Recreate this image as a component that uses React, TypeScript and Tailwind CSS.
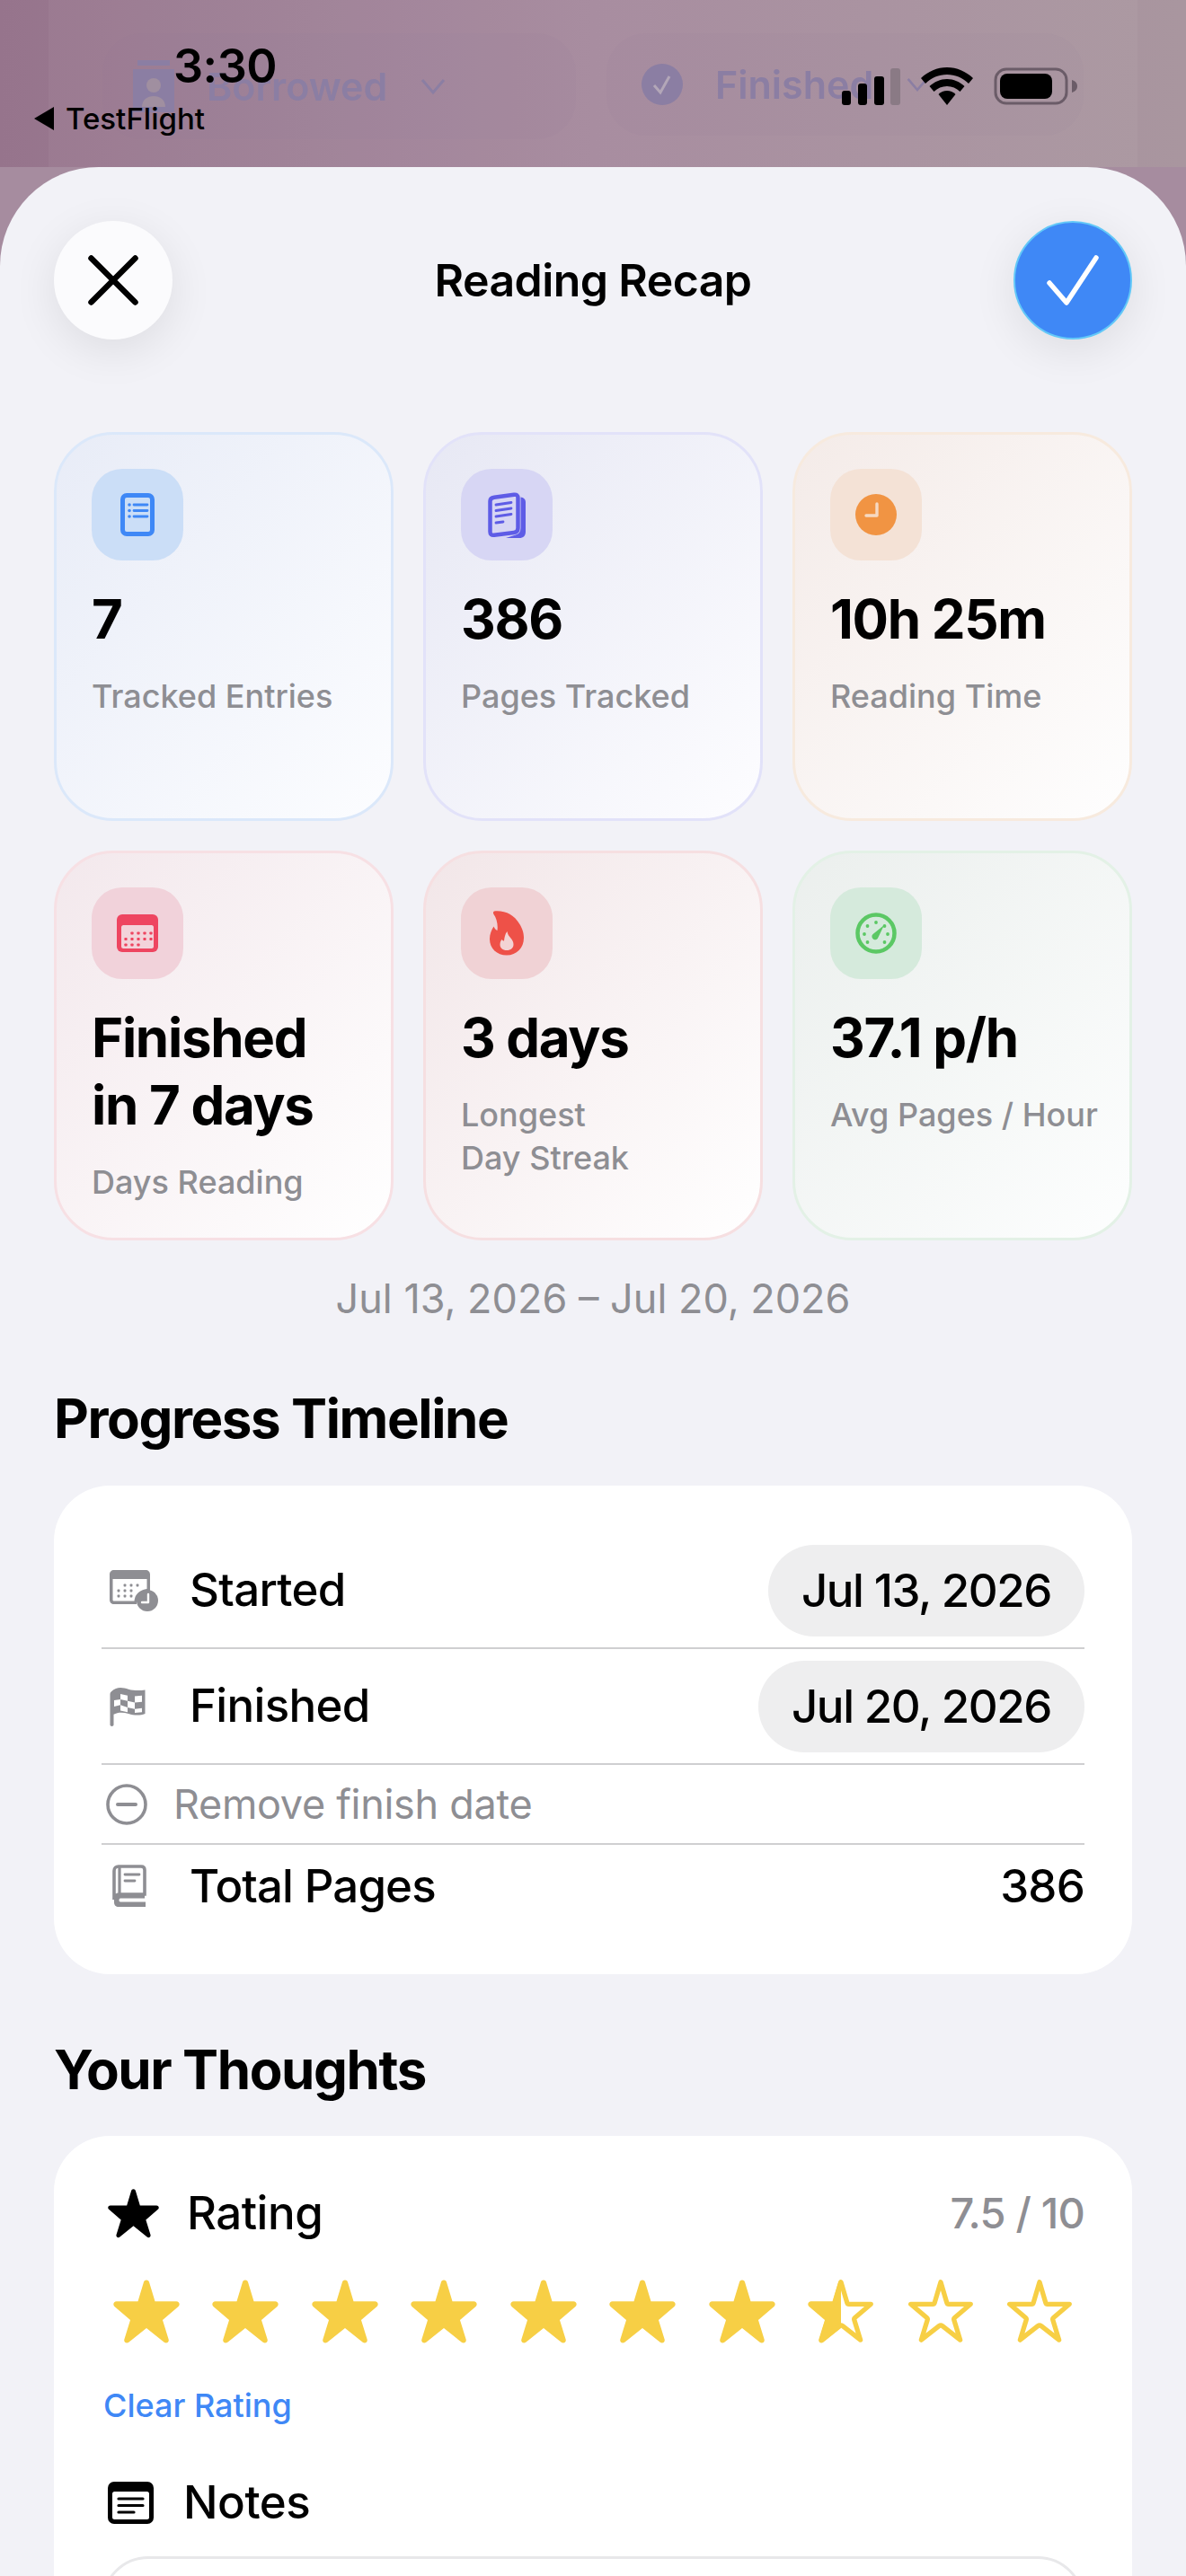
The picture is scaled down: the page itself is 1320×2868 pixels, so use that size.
const STAR =
  'M37 3.5C38.6 3.5 39.6 4.6 40 6L46 26H68.5C71.5 26 72.8 29.4 70.6 31.3L54 45.5L60.3 65.8C61.2 68.9 58 70.9 55.6 69L37 54L18.4 69C16 70.9 12.8 68.9 13.7 65.8L20 45.5L3.4 31.3C1.2 29.4 2.5 26 5.5 26H28L34 6C34.4 4.6 35.4 3.5 37 3.5Z';

const OUTLINE =
  'M37 5.5L43.5 27.5C43.8 28.4 44.4 28.8 45.3 28.8H68.5L51.6 43.2C50.9 43.8 50.7 44.5 51 45.4L57.5 66.5L38.8 51.8C37.7 51 36.3 51 35.2 51.8L16.5 66.5L23 45.4C23.3 44.5 23.1 43.8 22.4 43.2L5.5 28.8H28.7C29.6 28.8 30.2 28.4 30.5 27.5Z';

function Star({ kind }: { kind: 'full' | 'half' | 'empty' }) {
  if (kind === 'full') {
    return (
      <svg viewBox="2 3.5 70 67" className="h-[72px] w-[74px] text-[#f7cf45]">
        <path d={STAR} fill="currentColor" />
      </svg>
    );
  }
  return (
    <svg viewBox="2 3.5 70 67" className="h-[72px] w-[74px] text-[#f7cf45]">
      {kind === 'half' && (
        <>
          <clipPath id="half-star">
            <rect width="37" height="72" />
          </clipPath>
          <path d={STAR} fill="currentColor" clipPath="url(#half-star)" />
        </>
      )}
      <path d={OUTLINE} fill="none" stroke="currentColor" strokeWidth="5" strokeLinejoin="round" />
    </svg>
  );
}

function ListDocIcon() {
  return (
    <svg viewBox="0 0 38 48" className="h-[48px] w-[38px] text-[#3f88f6]">
      <rect x="2.5" y="2.5" width="33" height="43" rx="4.5" fill="none" stroke="currentColor" strokeWidth="5" />
      <circle cx="10" cy="13" r="1.8" fill="currentColor" />
      <circle cx="10" cy="19.5" r="1.8" fill="currentColor" />
      <circle cx="10" cy="26" r="1.8" fill="currentColor" />
      <path d="M15 13H30M15 19.5H30M15 26H30" stroke="currentColor" strokeWidth="2.8" strokeLinecap="round" />
    </svg>
  );
}

function PagesIcon() {
  return (
    <svg viewBox="0 0 42 51" className="h-[51px] w-[42px] text-[#5e5ce6]">
      <path d="M36.5 5.5C39.5 6 42 7.5 42 11V44C42 48.5 39.5 51 35 51H20L31 47.5C34.5 46.5 36.5 44 36.5 40Z" fill="currentColor" />
      <path d="M7 5.7L29 2.7C32 2.3 33.5 3.7 33.5 6.5V40C33.5 43 32 44.6 29 45L7 47.8C4 48.2 2.5 46.8 2.5 44V10C2.5 7.5 4 6.1 7 5.7Z" fill="none" stroke="currentColor" strokeWidth="4.5" />
      <path d="M9 14L26 11.5M9 20.5L26 18M9 27L26 24.5M9 34L17 33" stroke="currentColor" strokeWidth="2.8" strokeLinecap="round" />
    </svg>
  );
}

function ClockIcon() {
  return (
    <svg viewBox="0 0 46 46" className="h-[46px] w-[46px]">
      <circle cx="23" cy="23" r="23" fill="#f19443" />
      <path d="M24 11V24H12" fill="none" stroke="#f6d9c2" strokeWidth="3.4" strokeLinecap="round" strokeLinejoin="round" />
    </svg>
  );
}

function CalendarIcon() {
  const dots = [
    [17, 21], [24, 21], [31, 21], [38, 21],
    [10, 27.5], [17, 27.5], [24, 27.5], [31, 27.5], [38, 27.5],
    [10, 34], [17, 34], [24, 34],
  ];
  return (
    <svg viewBox="0 0 46 42" className="h-[42px] w-[46px]">
      <rect width="46" height="42" rx="6" fill="#ee4560" />
      <rect x="5" y="12" width="36" height="26" rx="2.5" fill="#f3d3da" />
      {dots.map(([x, y]) => (
        <rect key={`${x}-${y}`} x={x - 1.6} y={y - 1.6} width="3.2" height="3.2" rx="0.8" fill="#ee4560" />
      ))}
    </svg>
  );
}

function FlameIcon() {
  return (
    <svg viewBox="0 0 38 50" className="h-[50px] w-[38px]">
      <path
        d="M5 0.5C15 -0.5 25 3 31 11.5C36 18 38 24 38 30C38 41.5 30 49.5 19 49.5C8 49.5 0 42 0 31.5C0 26 2 21.5 4.5 17.5C5.5 19.5 6.5 21 8.5 22C9.5 15 7.5 8 4.5 4C3.7 2.5 3.7 1 5 0.5Z"
        fill="#ee5148"
      />
      <path
        d="M19.5 23C20 26.5 21.5 28 23.5 30.5C25.5 33 26.5 35 26.5 37.5C26.5 41.5 23.5 44 19 44C14.5 44 11.5 41.5 11.5 37.5C11.5 35 12.5 33.2 13.5 32C14.5 33 15.2 33.5 16 33.5C16.5 29.5 17 26 19.5 23Z"
        fill="#f3d3d4"
      />
    </svg>
  );
}

function GaugeIcon() {
  const dots = [[23, 11], [13.5, 15], [32.5, 15], [10, 24], [36, 24], [13.5, 33], [32.5, 33]];
  return (
    <svg viewBox="0 0 46 46" className="h-[46px] w-[46px] text-[#5bc864]">
      <circle cx="23" cy="23" r="20.5" fill="none" stroke="currentColor" strokeWidth="4.5" />
      {dots.map(([x, y]) => (
        <circle key={`${x}-${y}`} cx={x} cy={y} r="1.9" fill="currentColor" />
      ))}
      <path d="M32 14L25.5 27.5A3.6 3.6 0 1 1 19.6 24Z" fill="currentColor" />
    </svg>
  );
}

function CalendarClockIcon() {
  const dots = [
    [17, 17], [24, 17], [31, 17],
    [10, 23], [17, 23], [24, 23],
    [10, 29], [17, 29], [24, 29],
  ];
  return (
    <svg viewBox="0 0 54 46" className="h-[46px] w-[54px]">
      <path d="M5 0H40C43 0 45 2 45 5V23C38 23 31 27 30 38H5C2 38 0 36 0 33V5C0 2 2 0 5 0Z" fill="#8e8e93" />
      <path d="M3.500 10H41.500V21C34 22 28 27 27.500 34.500H5C4 34.500 3.500 34 3.500 33Z" fill="#fff" />
      {dots.map(([x, y]) => (
        <rect key={`${x}-${y}`} x={x - 1.4} y={y - 1.4} width="2.8" height="2.8" rx="0.6" fill="#8e8e93" />
      ))}
      <circle cx="42" cy="34" r="12" fill="#8e8e93" />
      <path d="M43 27V36H36" fill="none" stroke="#fff" strokeWidth="2.400" strokeLinecap="round" strokeLinejoin="round" />
    </svg>
  );
}

function CheckeredFlagIcon() {
  return (
    <svg viewBox="0 0 40 50" preserveAspectRatio="none" className="h-[44px] w-[40px]">
      <path d="M2 6C8 -1 15 1 21 3C27 5 33 5 39.500 4V34C33 37 27 36 21 34C15 32 9 32 4.500 35V48C4.500 50.500 0.500 50.500 0.500 48V9C0.500 8 1 7 2 6Z" fill="#8e8e93" />
      <path d="M12 9L20 11V18L28 20V12L36 11V19L28 20V28L36 27V32L28 33V28L20 26V32L12 30V23L20 26V18L12 16V23L5 25V17L12 16Z" fill="#fff" />
    </svg>
  );
}

function BookIcon() {
  return (
    <svg viewBox="0 0 38 48" className="h-[48px] w-[38px]">
      <path d="M7 2H32C34.500 2 36 3.500 36 6V33H8C4.500 33 2 35.500 2 39V7C2 4 4 2 7 2Z" fill="none" stroke="#8e8e93" strokeWidth="3.600" />
      <path d="M2 39C2 35.500 4.500 33 8 33H36V37.500H9C7 37.500 7 41.500 9 41.500H37V47H7C4 47 2 45 2 42Z" fill="#8e8e93" />
      <path d="M8 3V33" stroke="#8e8e93" strokeWidth="3.200" />
      <path d="M14 11H30M14 18H25" stroke="#8e8e93" strokeWidth="2.800" strokeLinecap="round" />
    </svg>
  );
}

function NotesIcon() {
  return (
    <svg viewBox="0 0 51 47" className="h-[47px] w-[51px]">
      <rect width="51" height="47" rx="7" fill="#000" />
      <rect x="5" y="11" width="41" height="31" rx="2.500" fill="#fff" />
      <path d="M12 19H39M12 26.500H39M12 34H29" stroke="#000" strokeWidth="3.200" strokeLinecap="round" />
    </svg>
  );
}

function StatusBar() {
  return (
    <div className="absolute inset-x-0 top-0 h-[186px]">
      <div className="absolute left-[193px] top-[42px] text-[52px] font-semibold leading-[64px] tracking-[-0.5px] text-black">3:30</div>
      <div className="absolute left-[38px] top-[110px] flex items-center gap-[13px] text-[33px] leading-[44px] font-medium text-black">
        <svg viewBox="0 0 22 26" className="h-[26px] w-[22px]">
          <path d="M22 0V26L0 13Z" fill="#000" />
        </svg>
        TestFlight
      </div>
      <div className="absolute left-[937px] top-[75px] flex items-center">
        <svg viewBox="0 0 65 42" className="h-[42px] w-[65px]">
          <rect x="0" y="26" width="10" height="16" rx="3" fill="#000" />
          <rect x="18" y="18" width="10" height="24" rx="3" fill="#000" />
          <rect x="36" y="10" width="11" height="32" rx="3" fill="#000" />
          <rect x="54" y="1" width="11" height="41" rx="3" fill="#8a7a85" />
        </svg>
        <svg viewBox="0 0 58 42" className="ml-[23px] h-[42px] w-[58px]">
          <path d="M29 0C40 0 50 4.500 58 12L53 18C46.500 11.500 38 8 29 8C20 8 11.500 11.500 5 18L0 12C8 4.500 18 0 29 0Z" fill="#000" />
          <path d="M29 13C36.500 13 43 16 48.500 21L43.500 27C39.500 23 34.500 21 29 21C23.500 21 18.500 23 14.500 27L9.500 21C15 16 21.500 13 29 13Z" fill="#000" />
          <path d="M29 26C32.500 26 36 27.500 38.500 30L29 42L19.500 30C22 27.500 25.500 26 29 26Z" fill="#000" />
        </svg>
        <svg viewBox="0 0 93 42" className="ml-[23px] h-[42px] w-[93px]">
          <rect x="2" y="2" width="79" height="38" rx="12" fill="none" stroke="#6b5c68" strokeWidth="3" />
          <rect x="7" y="7" width="58" height="28" rx="8" fill="#000" />
          <path d="M87 14C90.500 15 93 17.500 93 21C93 24.500 90.500 27 87 28Z" fill="#6b5c68" />
        </svg>
      </div>
    </div>
  );
}

function Backdrop() {
  return (
    <div className="h-[186px] bg-linear-to-r from-[#96748c] via-[#a5899d] to-[#a9969f] px-[54px]">
      <div className="h-full bg-[#ffffff]/4 px-[60px] pt-[37px]">
        <div className="flex gap-[34px]">
          <div className="flex h-[118px] w-[530px] items-center gap-[36px] rounded-[44px] bg-[#8878a0]/5 pl-[34px] text-[43px] font-semibold text-[#8b7ea3] blur-[0.5px]">
            <svg viewBox="0 0 46 58" className="h-[58px] w-[46px]">
              <path d="M5 0H41V6H5ZM0 10H46V58H0Z" fill="#8b7ea3" />
              <circle cx="23" cy="28" r="8" fill="#a08fa0" />
              <path d="M10 52C10 44 16 40 23 40C30 40 36 44 36 52Z" fill="#a08fa0" />
            </svg>
            <span>Borrowed</span>
            <svg viewBox="0 0 30 20" className="h-[20px] w-[30px]">
              <path d="M3 3L15 17L27 3" fill="none" stroke="#8b7ea3" strokeWidth="3" />
            </svg>
          </div>
          <div className="flex h-[114px] w-[534px] items-center gap-[36px] rounded-[44px] bg-[#8878a0]/5 pl-[39px] text-[43px] font-semibold text-[#8b7ea3] blur-[0.5px]">
            <svg viewBox="0 0 46 46" className="h-[46px] w-[46px]">
              <circle cx="23" cy="23" r="23" fill="#8b7ea3" />
              <path d="M14 24L21 32L31 14" fill="none" stroke="#b3a7b8" strokeWidth="3" />
            </svg>
            <span>Finished</span>
            <svg viewBox="0 0 30 20" className="h-[18px] w-[26px]">
              <path d="M3 3L15 17L27 3" fill="none" stroke="#8b7ea3" strokeWidth="3" />
            </svg>
          </div>
        </div>
      </div>
    </div>
  );
}

type Stat = {
  icon: React.ReactNode;
  value: React.ReactNode;
  label: React.ReactNode;
  card: string;
  chip: string;
};

const stats: Stat[] = [
  {
    icon: <ListDocIcon />,
    value: '7',
    label: 'Tracked Entries',
    card: 'border-[#dbe8fa] from-[#e8ecf7] to-[#fcfdff]',
    chip: 'bg-[#cbdef7]',
  },
  {
    icon: <PagesIcon />,
    value: '386',
    label: 'Pages Tracked',
    card: 'border-[#e2e2f9] from-[#e7e8f4] to-[#fdfdff]',
    chip: 'bg-[#d7d6f4]',
  },
  {
    icon: <ClockIcon />,
    value: '10h 25m',
    label: 'Reading Time',
    card: 'border-[#f7eade] from-[#f4ebe8] to-[#fefefe]',
    chip: 'bg-[#f4e2d6]',
  },
  {
    icon: <CalendarIcon />,
    value: (
      <>
        Finished
        <br />
        in 7 days
      </>
    ),
    label: 'Days Reading',
    card: 'border-[#f7e0e4] from-[#f3e8ec] to-[#ffffff]',
    chip: 'bg-[#f1d2da]',
  },
  {
    icon: <FlameIcon />,
    value: '3 days',
    label: (
      <>
        Longest
        <br />
        Day Streak
      </>
    ),
    card: 'border-[#f6dfe1] from-[#f2e6e8] to-[#ffffff]',
    chip: 'bg-[#f0d2d5]',
  },
  {
    icon: <GaugeIcon />,
    value: '37.1 p/h',
    label: 'Avg Pages / Hour',
    card: 'border-[#e3f1e6] from-[#ebefed] to-[#fdfefe]',
    chip: 'bg-[#d5eadc]',
  },
];

function StatCard({ stat }: { stat: Stat }) {
  return (
    <div className={`rounded-[66px] border-[3px] bg-linear-to-br pl-[39px] pt-[38px] ${stat.card}`}>
      <div className={`flex h-[102px] w-[102px] items-center justify-center rounded-[34px] ${stat.chip}`}>{stat.icon}</div>
      <div className="mt-[28px] text-[60px] font-bold leading-[75px] tracking-[-1.3px] text-black">{stat.value}</div>
      <div className="mt-[24px] whitespace-nowrap text-[36px] font-[450] leading-[48px] text-[#8e8e93]">{stat.label}</div>
    </div>
  );
}

function Divider() {
  return <div className="h-[2px] bg-[#cfcfd1]" />;
}

function DateRow({ icon, label, date }: { icon: React.ReactNode; label: string; date: string }) {
  return (
    <div className="flex h-[127px] items-center">
      <div className="flex w-[98px] justify-start pl-[9px]">{icon}</div>
      <span className="text-[51px] font-[450] tracking-[-0.7px] text-black">{label}</span>
      <span className="ml-auto rounded-full bg-[#eeeeef] px-[37px] py-[20px] text-[51px] font-[450] leading-[62px] tracking-[-1.4px] text-black">{date}</span>
    </div>
  );
}

export default function App() {
  return (
    <div className="relative flex h-[2868px] w-[1320px] flex-col overflow-hidden bg-[#a68c9f] font-['Inter',sans-serif]">
      <Backdrop />
      <StatusBar />
      <div className="absolute inset-x-0 top-[186px] bottom-0 rounded-t-[110px] bg-[#f2f2f7] px-[60px] pt-[60px]">
        <header className="flex items-center justify-between">
          <button className="flex h-[132px] w-[132px] items-center justify-center rounded-full bg-[#fbfbfd] shadow-[0_12px_50px_rgba(0,0,0,0.09)]">
            <svg viewBox="0 0 56 56" className="h-[56px] w-[56px]">
              <path d="M3.500 3.500L52.500 52.500M52.500 3.500L3.500 52.500" stroke="#000" strokeWidth="6.500" strokeLinecap="round" />
            </svg>
          </button>
          <h1 className="text-[50px] font-semibold leading-[64px] tracking-[-0.6px] text-black">Reading Recap</h1>
          <button className="flex h-[132px] w-[132px] items-center justify-center rounded-full border-[2px] border-[#62c8f8] bg-[#3f88f6] shadow-[0_12px_50px_rgba(0,0,0,0.09)]">
            <svg viewBox="0 0 58 56" className="h-[56px] w-[58px]">
              <path d="M3 31L22 53L55 3" fill="none" stroke="#fff" strokeWidth="5.500" strokeLinecap="round" strokeLinejoin="round" />
            </svg>
          </button>
        </header>

        <div className="mt-[103px] grid grid-cols-3 grid-rows-[433px_434px] gap-[33px]">
          {stats.map((stat, i) => (
            <StatCard key={i} stat={stat} />
          ))}
        </div>

        <p className="mt-[37px] text-center text-[45px] leading-[56px] text-[#8e8e93]">Jul 13, 2026 – Jul 20, 2026</p>

        <h2 className="mt-[69px] text-[60px] font-bold leading-[72px] tracking-[-1.4px] text-black">Progress Timeline</h2>
        <section className="mt-[39px] h-[544px] rounded-[62px] bg-white px-[53px] pt-[53px]">
          <DateRow icon={<CalendarClockIcon />} label="Started" date="Jul 13, 2026" />
          <Divider />
          <DateRow icon={<CheckeredFlagIcon />} label="Finished" date="Jul 20, 2026" />
          <Divider />
          <div className="flex h-[87px] items-center">
            <svg viewBox="0 0 46 46" className="ml-[5px] h-[46px] w-[46px]">
              <circle cx="23" cy="23" r="21" fill="none" stroke="#8e8e93" strokeWidth="3.600" />
              <path d="M13 23H33" stroke="#8e8e93" strokeWidth="4" strokeLinecap="round" />
            </svg>
            <span className="ml-[29px] text-[45px] tracking-[-0.3px] text-[#8e8e93]">Remove finish date</span>
          </div>
          <Divider />
          <div className="flex h-[92px] items-center">
            <div className="flex w-[98px] justify-start pl-[12px]">
              <BookIcon />
            </div>
            <span className="text-[51px] font-[450] tracking-[-0.9px] text-black">Total Pages</span>
            <span className="ml-auto text-[51px] font-[450] tracking-[-0.8px] text-black">386</span>
          </div>
        </section>

        <h2 className="mt-[70px] text-[60px] font-bold leading-[72px] tracking-[-1.4px] text-black">Your Thoughts</h2>
        <section className="mt-[38px] rounded-[62px] bg-white px-[53px] pt-[56px] pb-[80px]">
          <div className="flex items-center">
            <svg viewBox="2 3.5 70 67" className="ml-[7px] h-[55px] w-[57px]">
              <path d={STAR} fill="#000" />
            </svg>
            <span className="ml-[31px] text-[51px] font-medium leading-[60px] tracking-[-0.5px] text-black">Rating</span>
            <span className="ml-auto text-[47px] font-medium leading-[60px] tracking-[-0.8px] text-[#8e8e93]">7.5 / 10</span>
          </div>
          <div className="mt-[44px] flex justify-between px-[13px]">
            {[0, 1, 2, 3, 4, 5, 6].map((i) => (
              <Star key={i} kind="full" />
            ))}
            <Star kind="half" />
            <Star kind="empty" />
            <Star kind="empty" />
          </div>
          <p className="mt-[44px] ml-[2px] text-[36px] font-[450] leading-[48px] text-[#3f88f6]">Clear Rating</p>
          <div className="mt-[54px] flex items-center">
            <div className="ml-[7px]">
              <NotesIcon />
            </div>
            <span className="ml-[33px] text-[51px] font-medium leading-[60px] tracking-[-0.5px] text-black">Notes</span>
          </div>
          <div className="mt-[30px] h-[200px] rounded-[52px] border-[3px] border-[#e8e8ea]" />
        </section>
      </div>
    </div>
  );
}
